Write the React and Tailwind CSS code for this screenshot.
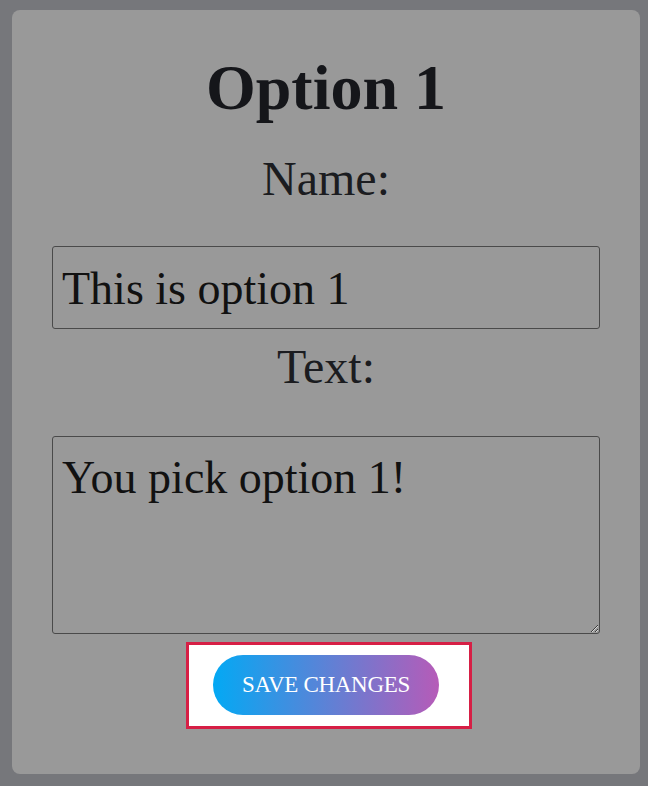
export default function App() {
  return (
    <div
      className="min-h-screen bg-[#76777b] pl-[12px] pr-[8px] pt-[10px] pb-[12px]"
      style={{ fontFamily: '"Liberation Serif", "Times New Roman", serif' }}
    >
      <div className="w-[628px] h-[764px] bg-[#999999] rounded-[8px] px-[40px] pt-[46px] flex flex-col items-center text-[#1b1c20]">
        <h1 className="text-[64px] leading-[64px] font-bold text-[#15161a]">Option 1</h1>

        <label className="mt-[35px] text-[48px] leading-[48px]">Name:</label>
        <input
          type="text"
          defaultValue="This is option 1"
          className="mt-[43px] w-full h-[83px] border border-[#4a4a4a] rounded-[3px] bg-transparent px-[9px] pt-[2px] text-[46px] text-[#111] outline-none"
        />

        <label className="mt-[14px] text-[48px] leading-[48px]">Text:</label>
        <textarea
          defaultValue="You pick option 1!"
          className="mt-[45px] w-full h-[198px] border border-[#4a4a4a] rounded-[3px] bg-transparent px-[9px] pt-[18px] text-[46px] leading-[46px] text-[#111] outline-none"
        />

        {/* highlighted button */}
        <div className="mt-[8px] ml-[6px] bg-white border-[3px] border-[#d61f45] pl-[24px] pr-[30px] pt-[10px] pb-[11px]">
          <button className="w-[226px] h-[60px] rounded-full bg-[linear-gradient(to_right,#03a9f4,#b65bb8)] text-white text-[23px] tracking-[-0.3px]">
            SAVE CHANGES
          </button>
        </div>
      </div>
    </div>
  );
}
